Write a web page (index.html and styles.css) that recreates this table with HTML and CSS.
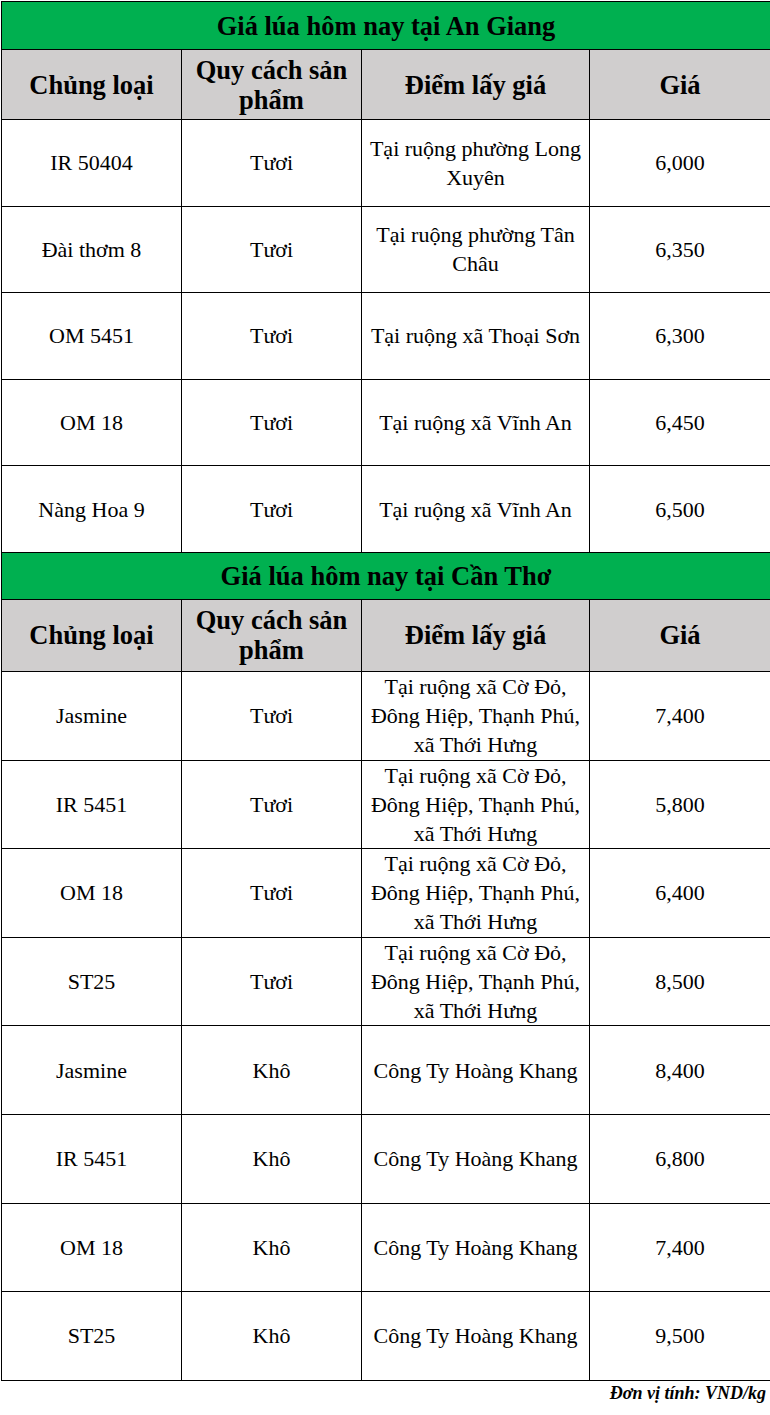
FILE: index.html
```html
<!DOCTYPE html>
<html lang="vi">
<head>
<meta charset="utf-8">
<title>Giá lúa hôm nay</title>
<link rel="stylesheet" href="styles.css">
</head>
<body>
<div class="page">
<table class="price">
<colgroup>
<col class="c1"><col class="c2"><col class="c3"><col class="c4">
</colgroup>
<tbody>
<tr class="title"><td colspan="4">Giá lúa hôm nay tại An Giang</td></tr>
<tr class="head"><th>Chủng loại</th><th>Quy cách sản phẩm</th><th>Điểm lấy giá</th><th>Giá</th></tr>
<tr class="r1"><td>IR 50404</td><td>Tươi</td><td>Tại ruộng phường Long Xuyên</td><td>6,000</td></tr>
<tr class="r1"><td>Đài thơm 8</td><td>Tươi</td><td>Tại ruộng phường Tân Châu</td><td>6,350</td></tr>
<tr class="r1"><td>OM 5451</td><td>Tươi</td><td>Tại ruộng xã Thoại Sơn</td><td>6,300</td></tr>
<tr class="r1"><td>OM 18</td><td>Tươi</td><td>Tại ruộng xã Vĩnh An</td><td>6,450</td></tr>
<tr class="r1"><td>Nàng Hoa 9</td><td>Tươi</td><td>Tại ruộng xã Vĩnh An</td><td>6,500</td></tr>
<tr class="title t2"><td colspan="4">Giá lúa hôm nay tại Cần Thơ</td></tr>
<tr class="head h2"><th>Chủng loại</th><th>Quy cách sản phẩm</th><th>Điểm lấy giá</th><th>Giá</th></tr>
<tr class="r2"><td>Jasmine</td><td>Tươi</td><td>Tại ruộng xã Cờ Đỏ, Đông Hiệp, Thạnh Phú, xã Thới Hưng</td><td>7,400</td></tr>
<tr class="r2"><td>IR 5451</td><td>Tươi</td><td>Tại ruộng xã Cờ Đỏ, Đông Hiệp, Thạnh Phú, xã Thới Hưng</td><td>5,800</td></tr>
<tr class="r2"><td>OM 18</td><td>Tươi</td><td>Tại ruộng xã Cờ Đỏ, Đông Hiệp, Thạnh Phú, xã Thới Hưng</td><td>6,400</td></tr>
<tr class="r2"><td>ST25</td><td>Tươi</td><td>Tại ruộng xã Cờ Đỏ, Đông Hiệp, Thạnh Phú, xã Thới Hưng</td><td>8,500</td></tr>
<tr class="r2"><td>Jasmine</td><td>Khô</td><td>Công Ty Hoàng Khang</td><td>8,400</td></tr>
<tr class="r2"><td>IR 5451</td><td>Khô</td><td>Công Ty Hoàng Khang</td><td>6,800</td></tr>
<tr class="r2"><td>OM 18</td><td>Khô</td><td>Công Ty Hoàng Khang</td><td>7,400</td></tr>
<tr class="r2"><td>ST25</td><td>Khô</td><td>Công Ty Hoàng Khang</td><td>9,500</td></tr>
</tbody>
</table>
<p class="unit">Đơn vị tính: VND/kg</p>
</div>
</body>
</html>
```
FILE: styles.css
```css
html, body {
  margin: 0;
  padding: 0;
  background: #ffffff;
}
body {
  font-family: "Liberation Serif", "Times New Roman", serif;
  color: #000000;
}
.page {
  width: 770px;
  padding-top: 1px;
}
.price {
  border-collapse: collapse;
  table-layout: fixed;
  width: 769px;
  margin-left: 1px;
}
.c1 { width: 180px; }
.c2 { width: 180px; }
.c3 { width: 228px; }
.c4 { width: 181px; }
.price td, .price th {
  border: 1px solid #000000;
  text-align: center;
  vertical-align: middle;
  padding: 0 6px;
  font-size: 22px;
  line-height: 29px;
  font-weight: normal;
}
.title td {
  background: #00b050;
  font-weight: bold;
  font-size: 26.5px;
  line-height: 30px;
  height: 47px;
  padding: 0;
}
.head th {
  background: #d0cece;
  font-weight: bold;
  font-size: 26.5px;
  line-height: 30px;
  height: 69px;
  padding: 0 4px;
}
.h2 th { height: 71px; }
.t2 td { height: 46px; }
.r1 td { height: 85.6px; }
.r2 td { height: 87.6px; }
.unit {
  margin: 0 4px 0 0;
  text-align: right;
  font-weight: bold;
  font-style: italic;
  font-size: 18px;
  line-height: 24px;
}
```
